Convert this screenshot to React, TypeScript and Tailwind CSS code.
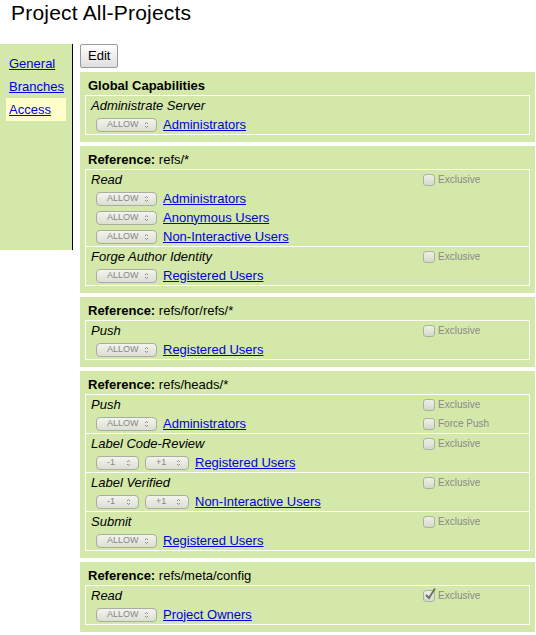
import type { ReactNode } from "react";

type Rule = { kind: "allow" | "range"; group: string };
type Section = { name: string; rules: Rule[]; exclusive?: boolean; forcePush?: boolean };
type Block = { title: ReactNode; global?: boolean; sections: Section[] };

const blocks: Block[] = [
  {
    title: "Global Capabilities",
    global: true,
    sections: [{ name: "Administrate Server", rules: [{ kind: "allow", group: "Administrators" }] }],
  },
  {
    title: "refs/*",
    sections: [
      {
        name: "Read",
        rules: [
          { kind: "allow", group: "Administrators" },
          { kind: "allow", group: "Anonymous Users" },
          { kind: "allow", group: "Non-Interactive Users" },
        ],
      },
      { name: "Forge Author Identity", rules: [{ kind: "allow", group: "Registered Users" }] },
    ],
  },
  {
    title: "refs/for/refs/*",
    sections: [{ name: "Push", rules: [{ kind: "allow", group: "Registered Users" }] }],
  },
  {
    title: "refs/heads/*",
    sections: [
      { name: "Push", rules: [{ kind: "allow", group: "Administrators" }], forcePush: true },
      { name: "Label Code-Review", rules: [{ kind: "range", group: "Registered Users" }] },
      { name: "Label Verified", rules: [{ kind: "range", group: "Non-Interactive Users" }] },
      { name: "Submit", rules: [{ kind: "allow", group: "Registered Users" }] },
    ],
  },
  {
    title: "refs/meta/config",
    sections: [{ name: "Read", rules: [{ kind: "allow", group: "Project Owners" }], exclusive: true }],
  },
];

function Arrows() {
  return (
    <svg width="5" height="8" viewBox="0 0 5 8" className="shrink-0">
      <path d="M1 3 L2.5 1.5 L4 3 M1 5 L2.5 6.5 L4 5" fill="none" stroke="#8a8a8a" strokeWidth="1" />
    </svg>
  );
}

function FakeSelect({ label, width }: { label: string; width: string }) {
  return (
    <span
      className={`inline-flex h-[14px] ${width} items-center justify-between rounded-[4px] border border-[#a9ad9f] bg-linear-to-b from-[#f3f4ee] to-[#dcdfd2] pr-[7px] pl-[10px] text-[9px] leading-none text-[#858585]`}
    >
      <span>{label}</span>
      <Arrows />
    </span>
  );
}

function Check({ label, checked }: { label: string; checked?: boolean }) {
  return (
    <div className="flex h-[19px] items-center gap-[3px] text-[10px] text-[#8a8a8a]">
      <span className="relative h-[12px] w-[12px] shrink-0 rounded-[3px] border border-[#adb2a0] bg-linear-to-b from-[#eef0e6] to-[#d5d9c9]">
        {checked && (
          <svg width="13" height="14" viewBox="0 0 13 14" className="absolute -top-[4px] left-[0px]">
            <path d="M2 8 L5 11 L11 1.5" fill="none" stroke="#6e7268" strokeWidth="2" />
          </svg>
        )}
      </span>
      <span>{label}</span>
    </div>
  );
}

function RuleRow({ rule }: { rule: Rule }) {
  return (
    <div className="flex h-[19px] items-center gap-[6px] pl-[10px]">
      {rule.kind === "allow" ? (
        <FakeSelect label="ALLOW" width="w-[61px]" />
      ) : (
        <>
          <FakeSelect label="-1" width="w-[43px]" />
          <FakeSelect label="+1" width="w-[44px]" />
        </>
      )}
      <a href="#" className="text-[#0000dd] underline">
        {rule.group}
      </a>
    </div>
  );
}

function Panel({ block }: { block: Block }) {
  return (
    <div className="bg-[#d4e8aa] px-[5px] pt-[4px] pb-[7px]">
      <div className="h-[19px] pl-[3px] leading-[19px]">
        {block.global ? (
          <span className="font-bold">{block.title}</span>
        ) : (
          <>
            <span className="font-bold">Reference:</span> {block.title}
          </>
        )}
      </div>
      <div className="border border-white">
        {block.sections.map((s, i) => (
          <div key={i} className={`flex ${i > 0 ? "border-t border-white" : ""}`}>
            <div className="flex-1">
              <div className="h-[19px] pl-[5px] leading-[19px] italic">{s.name}</div>
              {s.rules.map((r, j) => (
                <RuleRow key={j} rule={r} />
              ))}
            </div>
            {!block.global && (
              <div className="w-[106px]">
                <Check label="Exclusive" checked={s.exclusive} />
                {s.forcePush && <Check label="Force Push" />}
              </div>
            )}
          </div>
        ))}
      </div>
    </div>
  );
}

export default function App() {
  return (
    <div className="min-h-[635px] w-[536px] bg-white font-['Liberation_Sans',Arial,sans-serif] text-[13px] text-black">
      <h1 className="pt-px pb-[20px] pl-[11px] text-[21px] leading-[23px] font-normal tracking-[0.2px]">
        Project All-Projects
      </h1>
      <div className="flex items-start gap-[7px]">
        <div className="h-[206px] w-[73px] shrink-0 border-r border-black bg-[#d4e8aa] pt-[8px] pl-[6px]">
          {["General", "Branches", "Access"].map((name) => (
            <div
              key={name}
              className={`flex h-[23px] w-[60px] items-center pl-[3px] ${name === "Access" ? "bg-[#ffffcc]" : ""}`}
            >
              <a href="#" className="text-[#0000dd] underline">
                {name}
              </a>
            </div>
          ))}
        </div>
        <div className="flex flex-1 flex-col gap-[4px] pr-px">
          <div>
            <button
              type="button"
              className="h-[24px] rounded-[2px] border border-[#9a9a9a] bg-linear-to-b from-white to-[#dedede] px-[7px] text-[13px] text-black"
            >
              Edit
            </button>
          </div>
          {blocks.map((b, i) => (
            <Panel key={i} block={b} />
          ))}
        </div>
      </div>
    </div>
  );
}
